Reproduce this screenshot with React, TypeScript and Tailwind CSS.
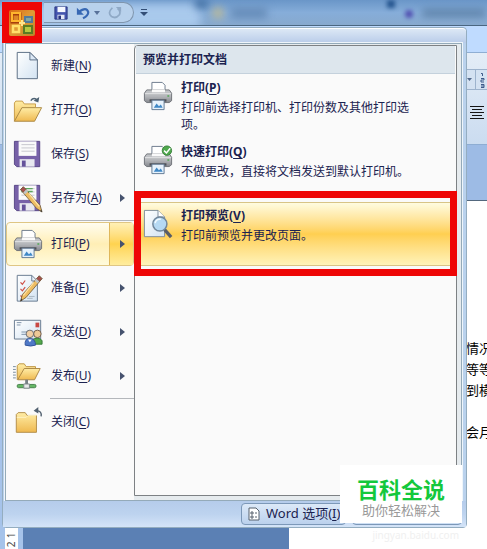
import type { ReactNode } from 'react'

type IconProps = { className?: string }

function Defs() {
  return (
    <svg width="0" height="0" className="absolute" aria-hidden="true">
      <defs>
        <linearGradient id="paper" x1="0" y1="0" x2="1" y2="1">
          <stop offset="0" stopColor="#fff" />
          <stop offset="1" stopColor="#d3e3f2" />
        </linearGradient>
        <linearGradient id="folder" x1="0" y1="0" x2="0" y2="1">
          <stop offset="0" stopColor="#ffeda6" />
          <stop offset="1" stopColor="#efb950" />
        </linearGradient>
        <linearGradient id="printer" x1="0" y1="0" x2="0" y2="1">
          <stop offset="0" stopColor="#c6c8cb" />
          <stop offset="0.5" stopColor="#b4b6ba" />
          <stop offset="1" stopColor="#85888e" />
        </linearGradient>
        <linearGradient id="office" x1="0" y1="0" x2="1" y2="1">
          <stop offset="0" stopColor="#d96c14" />
          <stop offset="0.5" stopColor="#e09a35" />
          <stop offset="1" stopColor="#b7862a" />
        </linearGradient>
      </defs>
    </svg>
  )
}

function Icon({ className = 'size-8', children }: IconProps & { children: ReactNode }) {
  return (
    <svg viewBox="0 0 32 32" className={className} fill="none" aria-hidden="true">
      {children}
    </svg>
  )
}

function Pencil() {
  return (
    <g>
      <path d="m28 3 3 3-17 20-6 4 2-7Z" fill="#eebd62" stroke="#665034" strokeWidth="0.8" />
      <path d="m28 3 3 3-3 3-3-3Z" fill="#a6504c" stroke="#654" strokeWidth="0.6" />
      <path d="m25 6 3 3-2 2-3-3Z" fill="#bfc4c8" />
      <path d="m22 10-11 14" stroke="#ffe6ad" strokeWidth="1.2" />
      <path d="m8 30 1-3 1 2Z" fill="#333" />
    </g>
  )
}

function NewIcon() {
  return (
    <Icon>
      <path d="M4.500 1.500H18l8 8v20H4.500Z" fill="url(#paper)" stroke="#566a80" />
      <path d="M18 1.500v8h8Z" fill="#dce8f5" stroke="#566a80" />
    </Icon>
  )
}

function OpenIcon() {
  return (
    <Icon>
      <path d="M1.500 28V8.500L3 6.500h7l2 3h12V13" fill="url(#folder)" stroke="#c59a46" />
      <path d="m1.500 28 8-14.500h21L23 28Z" fill="url(#folder)" stroke="#a98642" />
      <path d="M19 6c2-3 5-3 7 0" stroke="#4e6274" strokeWidth="1.500" />
      <path d="m28 2-1 6-5-2Z" fill="#4e6274" />
    </Icon>
  )
}

function Floppy() {
  return (
    <g>
      <path d="M1.500 2.500h27v27H4l-2.500-2.500Z" fill="#7761a8" stroke="#564585" />
      <path d="M6 2.500h19V18H6Z" fill="#fafafa" />
      <path d="M9 6h14M9 9.500h14M9 13h14" stroke="#c4c4cc" />
      <path d="M7 21.500h16v8H7Z" fill="#e8e8f0" />
      <path d="M9.500 23h4v6.500h-4Z" fill="#64519a" />
    </g>
  )
}

function SaveIcon() {
  return (
    <Icon>
      <Floppy />
    </Icon>
  )
}

function SaveAsIcon() {
  return (
    <Icon>
      <Floppy />
      <path d="M9 6h12M9 9h12" stroke="#5ea55d" strokeWidth="1.500" />
      <g transform="matrix(-1 0 0 1 39 1)">
        <Pencil />
      </g>
    </Icon>
  )
}

function PrinterIcon({ checked = false }: { checked?: boolean }) {
  return (
    <Icon>
      <path d="M9.500 12V1.500h11l3 3V12Z" fill="#fff" stroke="#69788a" />
      <path d="M4 9.500h24l2.500 3.500v8L28 23H4l-2.500-2v-8Z" fill="url(#printer)" stroke="#6d7076" />
      <path d="M9.500 9h14v3h-14Z" fill="#fafafa" />
      <path d="M2 13.500h28" stroke="#e4e5e6" />
      <path d="M26 16h2" stroke="#4aa64d" strokeWidth="1.500" />
      <path d="M7 19.500h18v2.500H7Z" fill="#4d5057" />
      <path d="M9.500 20.500h13v10h-13Z" fill="#e6f2fc" stroke="#5f7891" />
      <path d="m11.500 28.500 3-4.500 2.500 3 2-2 2 3.500Z" fill="#3f88c6" />
      {checked && (
        <g>
          <circle cx="25.500" cy="6" r="5" fill="#4fa94d" stroke="#377f3a" />
          <path d="m22.500 6 2.500 2.500 4-5" stroke="#fff" strokeWidth="1.600" />
        </g>
      )}
    </Icon>
  )
}

function PrepareIcon() {
  return (
    <Icon>
      <path d="M4.500 2.500H20l6 6v21.500H4.500Z" fill="url(#paper)" stroke="#64788d" />
      <path d="M20 2.500v6h6" stroke="#64788d" />
      <path d="m8 10 2 2 3-4m-5 9 2 2 3-4m-5 9 2 2 3-4" stroke="#cf5148" strokeWidth="1.300" />
      <path d="M17 25h6m-8 2h6" stroke="#a6b3c0" />
      <Pencil />
    </Icon>
  )
}

function SendIcon() {
  return (
    <Icon>
      <path d="M1.500 3.500h28v20h-28Z" fill="url(#paper)" stroke="#64788d" />
      <path d="M24 6h4v5h-4Z" fill="#c94843" />
      <path d="M4 6h5M4 8.500h4M9 16h8M9 18.500h5" stroke="#7b8fa5" />
      <circle cx="26" cy="18" r="4" fill="#edc896" stroke="#6e5948" />
      <path d="M20 29v-4q6-5 11 0v4Z" fill="#55a84b" stroke="#34773a" />
      <circle cx="18" cy="18" r="4" fill="#f1cfa6" stroke="#666a70" />
      <path d="M13 30q-1-7 5-7t6 7q-5 2-11 0Z" fill="#4e78c6" stroke="#32539a" />
      <path d="m16 24 2 3 2-3" fill="#fff" />
    </Icon>
  )
}

function PublishIcon() {
  return (
    <Icon>
      <path d="M0 6h3M0 9h3M0 12h3M0 15h3M0 18h3" stroke="#74899c" />
      <path d="M4.500 20V5l2-2H12l2 3h10v4" fill="url(#folder)" stroke="#bd923d" />
      <path d="m5 20 7-12h17l-6 12Z" fill="url(#folder)" stroke="#aa8543" />
      <path d="M14.500 20v5" stroke="#777f85" strokeWidth="3" />
      <rect x="4.500" y="25" width="20" height="3.500" rx="1.500" fill="#65b765" stroke="#447e4a" />
      <path d="M11.500 24.500h6v4.500h-6Z" fill="#e7e9e9" stroke="#7b8389" />
    </Icon>
  )
}

function CloseIcon() {
  return (
    <Icon>
      <path d="M3.500 27V8l2-2H13l2 3h10v18Z" fill="url(#folder)" stroke="#b18c45" />
      <path d="M4 11h10l2-2h9" stroke="#fff3c6" />
      <path d="M30 10q1-6-5-6" stroke="#526170" strokeWidth="1.500" />
      <path d="m27 0-5 4 5 3Z" fill="#526170" />
    </Icon>
  )
}

function PreviewIcon() {
  return (
    <Icon>
      <path d="M1.500 1.500H16l7 7v21H1.500Z" fill="url(#paper)" stroke="#7b8b9b" />
      <path d="M16 1.500v7h7" fill="#fff" stroke="#7b8b9b" />
      <path d="m23 22 7 8" stroke="#595d66" strokeWidth="3.500" />
      <circle cx="18" cy="16" r="7.500" fill="#b6d9f3" stroke="#71879c" strokeWidth="1.600" />
      <path d="M13 15q1-5 6-4" stroke="#f2faff" strokeWidth="1.600" />
    </Icon>
  )
}

function OfficeLogo() {
  return (
    <svg viewBox="0 0 28 28" className="size-7" fill="none" aria-hidden="true">
      <rect x="1" y="1" width="26" height="26" rx="2" fill="url(#office)" />
      <path d="M4 5h8v8H4Z" stroke="#a63e0c" strokeWidth="3" />
      <path d="M4 4h8v8H4Z" stroke="#ffb52d" strokeWidth="2" />
      <path d="M17 8h7v5h-7Z" fill="#83a8a0" stroke="#527a9a" strokeWidth="2" />
      <path d="M5 17h6v6H5Z" stroke="#ffe06a" strokeWidth="2.500" />
      <path d="M16 17h8v7h-8Z" fill="#b5c942" stroke="#587c24" strokeWidth="2" />
      <path d="M11 14h6m-3-3v6" stroke="#ffe58c" strokeWidth="2" />
    </svg>
  )
}

type MenuEntry = {
  label: string
  hotkey: string
  icon: ReactNode
  arrow?: boolean
  active?: boolean
  separator?: boolean
}

const menuEntries: MenuEntry[] = [
  { label: '新建', hotkey: 'N', icon: <NewIcon /> },
  { label: '打开', hotkey: 'O', icon: <OpenIcon /> },
  { label: '保存', hotkey: 'S', icon: <SaveIcon /> },
  { label: '另存为', hotkey: 'A', icon: <SaveAsIcon />, arrow: true },
  { label: '打印', hotkey: 'P', icon: <PrinterIcon />, arrow: true, active: true, separator: true },
  { label: '准备', hotkey: 'E', icon: <PrepareIcon />, arrow: true },
  { label: '发送', hotkey: 'D', icon: <SendIcon />, arrow: true },
  { label: '发布', hotkey: 'U', icon: <PublishIcon />, arrow: true },
  { label: '关闭', hotkey: 'C', icon: <CloseIcon />, separator: true },
]

const printEntries = [
  { label: '打印', hotkey: 'P', text: '打印前选择打印机、打印份数及其他打印选项。', icon: <PrinterIcon /> },
  { label: '快速打印', hotkey: 'Q', text: '不做更改，直接将文档发送到默认打印机。', icon: <PrinterIcon checked /> },
  { label: '打印预览', hotkey: 'V', text: '打印前预览并更改页面。', icon: <PreviewIcon />, active: true },
]

function Hotkey({ value }: { value: string }) {
  return (
    <>
      (<span className="underline underline-offset-2">{value}</span>)
    </>
  )
}

function MenuItem({ entry }: { entry: MenuEntry }) {
  return (
    <li>
      {entry.separator && <div className="ml-11 h-0.5 border-t border-[#b4b7bb]" />}
      <button
        type="button"
        className={`flex h-11 w-full items-center border pl-1.5 text-left ${
          entry.active
            ? 'rounded-sm border-[#dfc684] bg-linear-to-b from-[#fffdf0] via-[#ffeeb5] to-[#fffbdc]'
            : 'border-transparent'
        }`}
      >
        <span className="shrink-0 [&>svg]:size-[30px]">{entry.icon}</span>
        <span className="ml-2 flex-1 whitespace-nowrap">
          {entry.label}
          <Hotkey value={entry.hotkey} />
        </span>
        {entry.arrow && (
          <span
            className={`flex w-6 items-center self-stretch border-l pl-2.5 ${
              entry.active
                ? 'border-[#dfb75a] bg-linear-to-b from-[#fff0b5] via-[#ffd34f] to-[#ffed9d]'
                : 'border-transparent'
            }`}
          >
            <svg viewBox="0 0 5 8" className="h-2 w-[5px]" aria-hidden="true">
              <path d="M0 0v8l5-4Z" fill="#46526e" />
            </svg>
          </span>
        )}
      </button>
    </li>
  )
}

function QuickAccess() {
  return (
    <div className="relative flex h-[21px] w-[90px] items-center rounded-r-full border border-l-0 border-[#7f95ad] bg-[#b8d1ec] pl-2.5">
      <button type="button" aria-label="保存" className="w-[22px]">
        <svg viewBox="0 0 16 16" className="size-3.5" fill="none">
          <path d="M1 1h14v14H1Z" fill="#4455ae" stroke="#26327d" />
          <path d="M4 1h9v6H4Z" fill="#f5f8ff" />
          <path d="M4 10h8v5H4Z" fill="#e2e8f5" />
          <path d="M5 11h3v4H5Z" fill="#26327d" />
        </svg>
      </button>
      <button type="button" aria-label="撤消" className="w-[18px]">
        <svg viewBox="0 0 16 16" className="size-3.5" fill="none">
          <path d="M3 7q9-7 11 0 0 4-6 7" stroke="#3768b4" strokeWidth="2.500" />
          <path d="M1 2v8h8Z" fill="#3768b4" />
        </svg>
      </button>
      <svg viewBox="0 0 6 4" className="h-1 w-1.5" aria-hidden="true">
        <path d="M0 0h6L3 4Z" fill="#587199" />
      </svg>
      <button type="button" aria-label="恢复" className="ml-2">
        <svg viewBox="0 0 16 16" className="size-3.5" fill="none">
          <path d="M5 2q-6 6-1 10 5 3 9-2 2-4-2-7" stroke="#8fa9c6" strokeWidth="2" />
          <path d="M9 1h6v6Z" fill="#8fa9c6" />
        </svg>
      </button>
    </div>
  )
}

function TitleBar() {
  return (
    <header className="relative flex h-[26px] items-center overflow-hidden border-b border-[#4a6680] bg-linear-to-b from-[#6a96c8] via-[#86add9] to-[#87a9ce] pl-11">
      <div className="absolute top-1 left-0 h-6 w-[200px] bg-[#a9c9ec] blur-xs" />
      <div className="absolute top-0 left-[195px] h-2 w-3 bg-[#356499] blur-xs" />
      <div className="absolute top-2 left-[213px] size-2.5 rounded bg-[#c2b98a] blur-xs" />
      <div className="absolute top-2 left-[231px] h-2.5 w-9 bg-[#6389b6] blur-xs" />
      <div className="absolute top-0 left-[387px] h-2 w-2 bg-[#25558f] blur-[2px]" />
      <div className="absolute top-2.5 left-[405px] size-2 rounded-full bg-[#504fb0] blur-[2px]" />
      <div className="absolute top-2.5 left-[422px] h-1.5 w-16 bg-[#4f7398] blur-xs" />
      <QuickAccess />
      <svg viewBox="0 0 8 8" className="relative ml-1.5 size-2" aria-hidden="true">
        <path d="M1 0h6v1H1ZM0 3h8L4 7Z" fill="#334e76" />
      </svg>
    </header>
  )
}

function Ribbon() {
  return (
    <div className="flex h-[174px] flex-col items-end bg-[#9dbbe5]">
      <div className="h-[27px] w-full border-b border-[#8faed3] bg-[#bfdbff]" />
      <div className="flex h-[92px] w-full flex-col items-end border-b border-[#8eadd3] bg-linear-to-b from-[#e4edf7] to-[#cbdcf0] pt-4">
        <div className="flex h-[21px] w-5 items-center border-y border-[#9db3cd] bg-[#d4e2f2]">
          <svg viewBox="0 0 20 20" className="size-5" fill="none" aria-hidden="true">
            <path d="M0 8h5l-2.500 3Z" fill="#52698b" />
            <path d="M8.500 0v20" stroke="#9db3cd" />
            <path d="M14 3.500h1.500V6M14 8.500h3v1.500h-3v2h3M14 14.500h3v3h-3m0-1.500h3" stroke="#3d5a8a" />
          </svg>
        </div>
        <svg viewBox="0 0 20 24" className="mt-3 h-6 w-5" fill="none" aria-hidden="true">
          <path d="M3 4.500h14M5 7.500h10M3 10.500h14M5 13.500h10M3 16.500h14" stroke="#151515" />
        </svg>
      </div>
    </div>
  )
}

function OfficeMenu() {
  return (
    <div className="absolute top-[27px] right-5 left-0.5 flex flex-col rounded-sm border border-[#94adc0] bg-[#bad2ed] pr-1 pl-0.5">
      <div className="-mr-1 -ml-0.5 h-[15px] rounded-t-sm border-t border-white bg-linear-to-b from-[#dce8f5] to-[#b9cce9]" />
      <div className="flex min-h-[458px] border border-[#94aab9] bg-[#e6ebee] pr-1 outline outline-[#eef5fa]">
        <nav className="w-32 shrink-0 bg-[#fafafa]">
          <ul>
            {menuEntries.map((entry) => (
              <MenuItem key={entry.label} entry={entry} />
            ))}
          </ul>
        </nav>
        <section className="relative mt-px mb-1 min-w-0 flex-1 rounded-tl-sm border border-[#7d8184] bg-[#fafafa]">
          <h2 className="mx-px flex h-7 items-center border-b border-[#c4d1dc] bg-[#dde6ed] pl-[7px] font-bold">
            预览并打印文档
          </h2>
          <ul>
            {printEntries.map((entry) => (
              <li key={entry.label}>
                <button
                  type="button"
                  className={`flex h-16 w-full items-start border-y pl-2 text-left ${
                    entry.active
                      ? 'border-[#d8c486] bg-linear-to-b from-[#fffce0] via-[#ffcf50] to-[#fff3b8]'
                      : 'border-transparent'
                  }`}
                >
                  <span className="mt-1.5 shrink-0 [&>svg]:size-[30px]">{entry.icon}</span>
                  <span className="mt-1 ml-2 w-[232px] leading-[17px]">
                    <span className="mb-[3px] block font-bold">
                      {entry.label}
                      <Hotkey value={entry.hotkey} />
                    </span>
                    <span className="block">{entry.text}</span>
                  </span>
                </button>
              </li>
            ))}
          </ul>
          <div className="pointer-events-none absolute top-[145px] -right-px -left-px h-[85px] border-7 border-[#ee0606]" />
        </section>
      </div>
      <footer className="-mr-1 -ml-0.5 flex h-[26px] items-center justify-end gap-1.5 bg-linear-to-b from-[#b5cceb] via-[#bdd3ef] to-[#d4e4f8] pr-1">
        <button
          type="button"
          className="flex h-[22px] w-[105px] items-center rounded-sm border border-[#7c98b8] bg-linear-to-b from-[#dce9f8] to-[#bbd1ed] pl-1.5 text-[13px] whitespace-nowrap"
        >
          <svg viewBox="0 0 12 14" className="mr-1.5 h-3.5 w-3 shrink-0" fill="none" aria-hidden="true">
            <path d="M1 1h7l3 3v9H1Z" fill="#fff" stroke="#56616d" />
            <path d="M3 5h2v2H3Zm0 4h2v2H3Z" stroke="#56616d" />
            <path d="M7 6h2m-2 4h2" stroke="#56616d" />
          </svg>
          <span>
            Word 选项
            <Hotkey value="I" />
          </span>
        </button>
        <button type="button" aria-label="退出 Word" className="h-[22px] w-[110px] rounded-sm border border-[#7c98b8] bg-[#cddff4]" />
      </footer>
    </div>
  )
}

export default function App() {
  return (
    <div className="relative flex min-h-screen flex-col overflow-hidden bg-[#afcbe9] font-['Noto_Sans','Noto_Sans_CJK_SC',sans-serif] text-xs text-[#1b2350]">
      <Defs />
      <TitleBar />
      <Ribbon />
      <main className="flex flex-1 bg-[#5b80b4]">
        <div className="flex w-[23px] shrink-0 items-end bg-[#a6c3ea] pl-[5px]">
          <div className="flex h-full w-[13px] flex-col items-center justify-end bg-white text-[10px] leading-[9px] text-[#444]">
            <span className="-rotate-90">1</span>
            <span className="-rotate-90">2</span>
          </div>
        </div>
        <article className="ml-[266px] flex-1 border-t border-[#53687e] bg-white pt-[137px] pl-[177px] text-[13px] leading-[21px] whitespace-nowrap text-black">
          <p>情况</p>
          <p>等等</p>
          <p>到横</p>
          <p className="mt-[21px]">会月</p>
        </article>
      </main>
      <OfficeMenu />
      <button
        type="button"
        aria-label="Office"
        className="absolute top-0.5 left-0.5 flex h-[41px] w-10 items-center justify-center bg-[#ee0606]"
      >
        <OfficeLogo />
      </button>
      <span className="absolute right-7 bottom-2 text-[10px] leading-3 text-[#f0f0f0]">jingyan.baidu.com</span>
      <aside className="absolute right-[25px] bottom-[26px] flex h-[58px] w-[122px] flex-col items-center bg-white pt-3">
        <strong className="text-[22px] leading-6 font-bold text-[#14c83c]">百科全说</strong>
        <span className="text-[13px] leading-[18px] text-[#999]">助你轻松解决</span>
      </aside>
    </div>
  )
}
